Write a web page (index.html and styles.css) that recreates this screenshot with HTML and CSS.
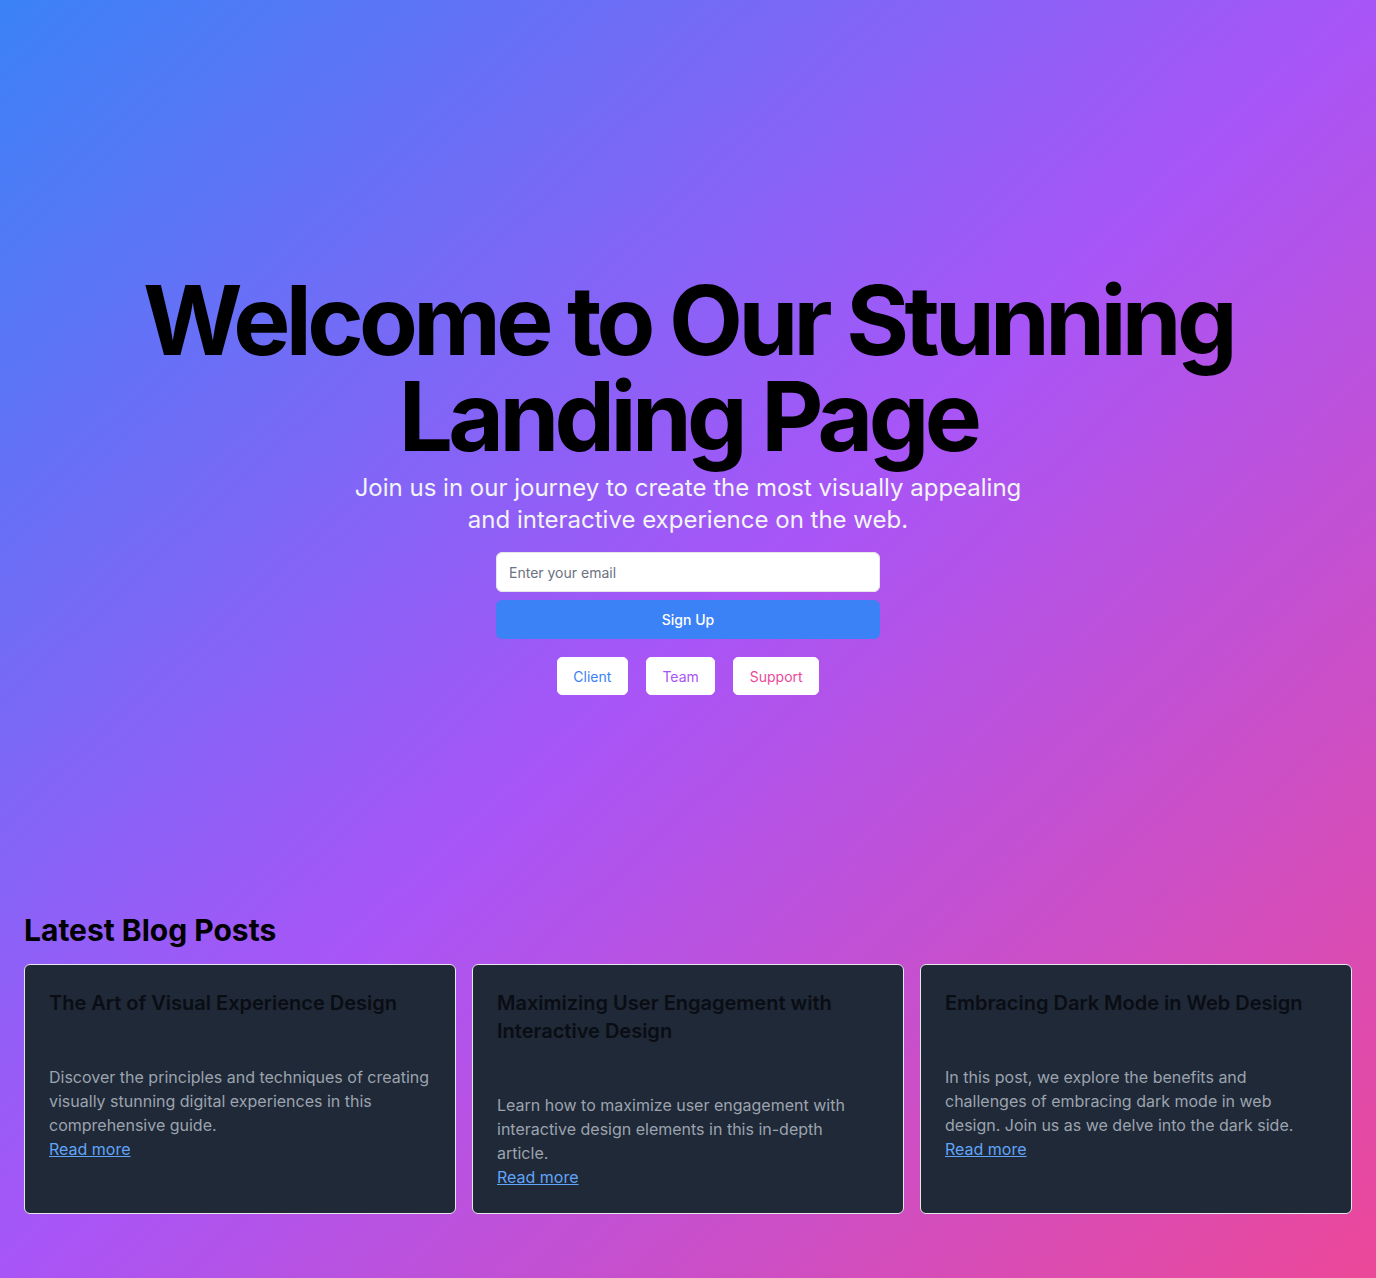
FILE: index.html
```html
<!DOCTYPE html>
<html lang="en">
<head>
<meta charset="utf-8">
<title>Landing Page</title>
<link rel="stylesheet" href="styles.css">
</head>
<body>
<main class="page">
  <section class="hero">
    <h1 class="hero-title">Welcome to Our Stunning Landing Page</h1>
    <p class="hero-text">Join us in our journey to create the most visually appealing and interactive experience on the web.</p>
    <form class="signup">
      <input class="signup-input" type="email" placeholder="Enter your email">
      <button class="signup-btn" type="button">Sign Up</button>
    </form>
    <div class="roles">
      <button class="role role-client" type="button">Client</button>
      <button class="role role-team" type="button">Team</button>
      <button class="role role-support" type="button">Support</button>
    </div>
  </section>
  <section class="blog">
    <h2 class="blog-title">Latest Blog Posts</h2>
    <div class="blog-grid">
      <article class="card">
        <h3 class="card-title">The Art of Visual Experience Design</h3>
        <p class="card-text">Discover the principles and techniques of creating visually stunning digital experiences in this comprehensive guide.</p>
        <a class="card-link" href="#">Read more</a>
      </article>
      <article class="card">
        <h3 class="card-title">Maximizing User Engagement with Interactive Design</h3>
        <p class="card-text">Learn how to maximize user engagement with interactive design elements in this in-depth article.</p>
        <a class="card-link" href="#">Read more</a>
      </article>
      <article class="card">
        <h3 class="card-title">Embracing Dark Mode in Web Design</h3>
        <p class="card-text">In this post, we explore the benefits and challenges of embracing dark mode in web design. Join us as we delve into the dark side.</p>
        <a class="card-link" href="#">Read more</a>
      </article>
    </div>
  </section>
</main>
</body>
</html>
```
FILE: styles.css
```css
* { box-sizing: border-box; }
html, body { margin: 0; padding: 0; }
body {
  min-height: 100vh;
  font-family: Inter, "Noto Sans", sans-serif;
  background: linear-gradient(to bottom right, #3b82f6, #a855f7, #ec4899);
  color: #000;
}
.page { min-height: 100vh; }
.hero {
  display: flex;
  flex-direction: column;
  align-items: center;
  text-align: center;
  padding: 272px 24px 193px;
}
.hero-title {
  margin: 0 0 8px;
  font-size: 96px;
  line-height: 96px;
  font-weight: 700;
  letter-spacing: -0.048em;
  color: #000;
}
.hero-text {
  margin: 0 0 16px;
  max-width: 672px;
  font-size: 24px;
  line-height: 32px;
  color: #f3f4f6;
}
.signup {
  width: 384px;
  display: flex;
  flex-direction: column;
  gap: 8px;
}
.signup-input {
  height: 40px;
  padding: 0 12px;
  border: 1px solid #e5e7eb;
  border-radius: 6px;
  font-family: inherit;
  font-size: 14px;
  background: #fff;
  color: #111827;
}
.signup-input::placeholder { color: #6b7280; }
.signup-btn {
  height: 39px;
  border: none;
  border-radius: 6px;
  background: #3b82f6;
  color: #fff;
  font-family: inherit;
  font-size: 14px;
  font-weight: 500;
}
.roles {
  margin-top: 18px;
  display: flex;
  gap: 18px;
}
.role {
  height: 38px;
  padding: 0 15.5px;
  border: 1px solid #fff;
  border-radius: 5px;
  background: #fff;
  font-family: inherit;
  font-size: 14px;
}
.role-client { color: #3b82f6; }
.role-team { color: #a855f7; }
.role-support { color: #ec4899; }
.blog { padding: 23.5px 24px 24px; }
.blog-title {
  margin: 0 0 16px;
  font-size: 30px;
  line-height: 36px;
  font-weight: 700;
  color: #000;
}
.blog-grid {
  display: grid;
  grid-template-columns: repeat(3, 1fr);
  gap: 16px;
}
.card {
  background: #1f2937;
  border: 1px solid #e5e7eb;
  border-radius: 6px;
  padding: 24px;
}
.card-title {
  margin: 0 0 48px;
  font-size: 20px;
  line-height: 28px;
  font-weight: 600;
  color: #0a0d14;
}
.card-text {
  margin: 0;
  padding-right: 1.5px;
  font-size: 16px;
  line-height: 24px;
  color: #9ca3af;
}
.card-link {
  font-size: 16px;
  line-height: 24px;
  color: #60a5fa;
  text-decoration: underline;
}
```
